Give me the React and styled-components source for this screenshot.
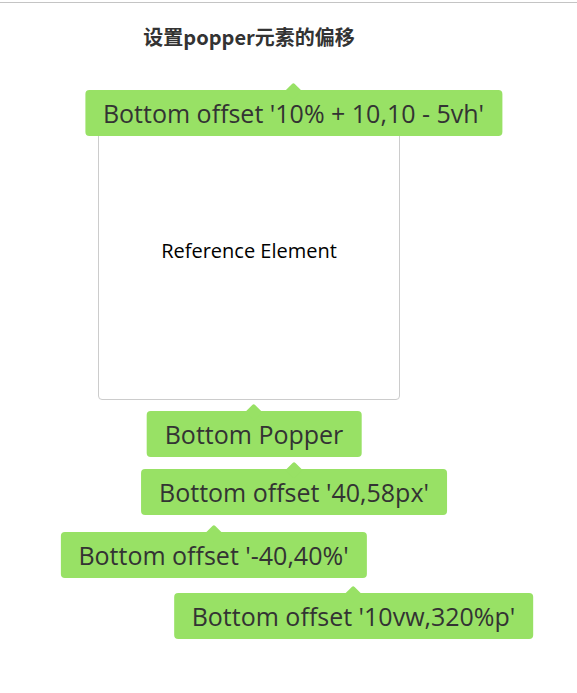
import styled, { createGlobalStyle } from "styled-components";

const GlobalStyle = createGlobalStyle`
  body {
    margin: 0;
    background: #fff;
    font-family: "Open Sans", "Noto Sans CJK SC", sans-serif;
    color: #333;
  }
`;

const Page = styled.div`
  margin-top: 2px;
  border-top: 1px solid #c4c4c4;
  height: 690px;
`;

const Demo = styled.div`
  width: 302px;
  margin-left: 98px;
`;

const Title = styled.h3`
  margin: 0;
  padding-top: 21px;
  text-align: center;
  font-family: "Noto Sans CJK SC", sans-serif;
  font-size: 20px;
  font-weight: 700;
  line-height: 26px;
  color: #333;
`;

const Stage = styled.div`
  position: relative;
  margin-top: 50px;
`;

const Reference = styled.div`
  height: 300px;
  box-sizing: border-box;
  border: 1px solid #ccc;
  border-radius: 4px;
  display: flex;
  align-items: center;
  justify-content: center;
  font-size: 20px;
  color: #000;
`;

const Popper = styled.div`
  position: absolute;
  left: ${(p) => p.$center}px;
  top: ${(p) => p.$top}px;
  transform: translateX(-50%);
  white-space: nowrap;
  background: #98e165;
  color: #333;
  border-radius: 4px;
  padding: 0 18px;
  height: 46px;
  line-height: 46px;
  font-size: 25px;

  &::before {
    content: "";
    position: absolute;
    left: 50%;
    top: -5px;
    width: 12px;
    height: 12px;
    background: #98e165;
    border-top-left-radius: 2px;
    transform: translateX(-50%) rotate(45deg);
  }
`;

const poppers = [
  { text: "Bottom offset '10% + 10,10 - 5vh'", center: 195.5, top: -10 },
  { text: "Bottom Popper", center: 156, top: 311 },
  { text: "Bottom offset '40,58px'", center: 196, top: 369 },
  { text: "Bottom offset '-40,40%'", center: 115.5, top: 432 },
  { text: "Bottom offset '10vw,320%p'", center: 255.5, top: 493 },
];

export default function App() {
  return (
    <>
      <GlobalStyle />
      <Page>
        <Demo>
          <Title>设置popper元素的偏移</Title>
          <Stage>
            <Reference>Reference Element</Reference>
            {poppers.map((p) => (
              <Popper key={p.text} $center={p.center} $top={p.top}>
                {p.text}
              </Popper>
            ))}
          </Stage>
        </Demo>
      </Page>
    </>
  );
}
